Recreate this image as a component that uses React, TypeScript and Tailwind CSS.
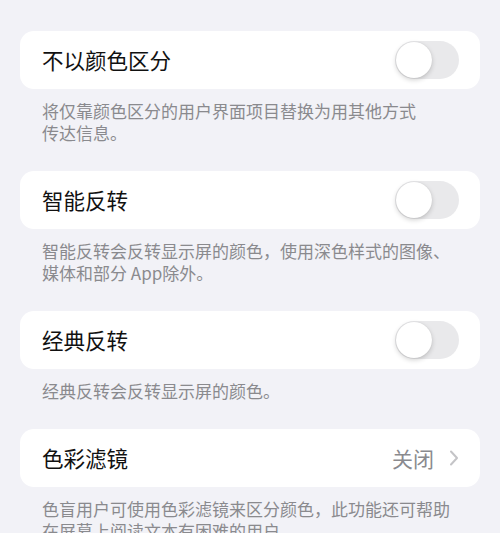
const font = { fontFamily: '"Noto Sans CJK SC", "Noto Sans", sans-serif' };

function Toggle() {
  return (
    <div className="w-[64px] h-[38px] rounded-full bg-[#e9e9eb] p-[1px] flex items-center">
      <div className="w-[36px] h-[36px] rounded-full bg-white shadow-[0_2px_5px_rgba(0,0,0,0.18),0_0_1px_rgba(0,0,0,0.12)]" />
    </div>
  );
}

type Item = { title: string; desc: string[]; value?: string };

const items: Item[] = [
  { title: "不以颜色区分", desc: ["将仅靠颜色区分的用户界面项目替换为用其他方式", "传达信息。"] },
  { title: "智能反转", desc: ["智能反转会反转显示屏的颜色，使用深色样式的图像、", "媒体和部分 App除外。"] },
  { title: "经典反转", desc: ["经典反转会反转显示屏的颜色。"] },
  { title: "色彩滤镜", value: "关闭", desc: ["色盲用户可使用色彩滤镜来区分颜色，此功能还可帮助", "在屏幕上阅读文本有困难的用户。"] },
];

export default function App() {
  return (
    <div className="w-[500px] h-[533px] overflow-hidden bg-[#f2f2f7] pt-[31px] px-[20px]" style={font}>
      {items.map(item => (
        <div key={item.title} className="mb-[27px]">
          <div className="h-[58px] bg-white rounded-[14px] flex items-center justify-between pl-[22px] pr-[21px]">
            <span className="text-[21.5px] text-[#111] leading-none">{item.title}</span>
            {item.value ? (
              <div className="flex items-center gap-[15px]">
                <span className="text-[21px] text-[#8a8a8e] leading-none">{item.value}</span>
                <svg width="10" height="16" viewBox="0 0 10 16" fill="none">
                  <path d="M2 1.5L8 8L2 14.5" stroke="#c4c4c7" strokeWidth="2" strokeLinecap="round" strokeLinejoin="round" />
                </svg>
              </div>
            ) : (
              <Toggle />
            )}
          </div>
          <div className="pt-[11px] pl-[22px] text-[17px] leading-[22px] text-[#8a8a8e]">
            {item.desc.map(line => (
              <div key={line} className="whitespace-nowrap">{line}</div>
            ))}
          </div>
        </div>
      ))}
    </div>
  );
}
